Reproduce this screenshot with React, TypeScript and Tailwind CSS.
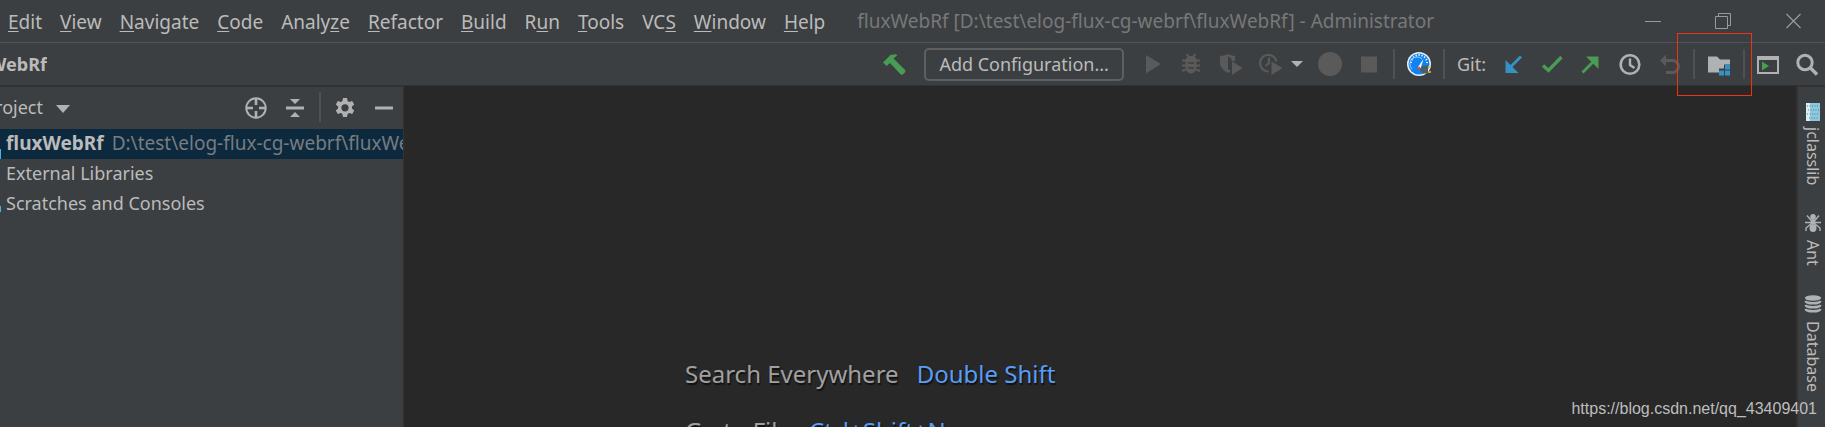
import type { ReactNode } from 'react';

type MenuEntry = { before: string; key: string; after: string };

const MENU: MenuEntry[] = [
  { before: '', key: 'E', after: 'dit' },
  { before: '', key: 'V', after: 'iew' },
  { before: '', key: 'N', after: 'avigate' },
  { before: '', key: 'C', after: 'ode' },
  { before: 'Analy', key: 'z', after: 'e' },
  { before: '', key: 'R', after: 'efactor' },
  { before: '', key: 'B', after: 'uild' },
  { before: 'R', key: 'u', after: 'n' },
  { before: '', key: 'T', after: 'ools' },
  { before: 'VC', key: 'S', after: '' },
  { before: '', key: 'W', after: 'indow' },
  { before: '', key: 'H', after: 'elp' },
];

function Icon({ children }: { children: ReactNode }) {
  return (
    <svg viewBox="0 0 24 24" className="block size-6" aria-hidden="true">
      {children}
    </svg>
  );
}

function IconButton({ label, children }: { label: string; children: ReactNode }) {
  return (
    <button type="button" aria-label={label} className="size-6 shrink-0">
      <Icon>{children}</Icon>
    </button>
  );
}

function Separator() {
  return <span className="mx-3 h-[30px] w-0.5 shrink-0 bg-[#515151]" />;
}

function TitleBar() {
  return (
    <header className="flex h-[43px] items-center border-b border-[#515457] pr-6">
      <nav className="flex shrink-0 items-center gap-[18px] pt-0.5 pl-2 text-[19px] leading-7">
        {MENU.map((m) => (
          <button type="button" key={m.before + m.key + m.after} className="whitespace-nowrap text-[#bbbbbb]">
            {m.before}
            <span className="underline decoration-1 underline-offset-2">{m.key}</span>
            {m.after}
          </button>
        ))}
      </nav>
      <h1 className="ml-8 min-w-0 flex-1 truncate text-[19px] leading-7 text-[#777879]">
        fluxWebRf [D:\test\elog-flux-cg-webrf\fluxWebRf] - Administrator
      </h1>
      <div className="flex shrink-0 gap-[54px]">
        <button type="button" aria-label="Minimize" className="size-4">
          <svg viewBox="0 0 16 16" className="block size-4" stroke="#999a9b" fill="none">
            <path d="M0 8.500h16" />
          </svg>
        </button>
        <button type="button" aria-label="Restore" className="size-4">
          <svg viewBox="0 0 16 16" className="block size-4" stroke="#999a9b" fill="none">
            <path d="M.5 3.500h12v12h-12zM3.500 3.500v-3h12v12h-3" />
          </svg>
        </button>
        <button type="button" aria-label="Close" className="size-4">
          <svg viewBox="0 0 16 16" className="block size-4" stroke="#999a9b" strokeWidth="1.200" fill="none">
            <path d="M1.500 1l14 14M15.500 1l-14 14" />
          </svg>
        </button>
      </div>
    </header>
  );
}

function Toolbar() {
  return (
    <div className="flex h-[43px] items-center justify-between border-b border-[#323232] pr-[5px]">
      <div className="flex w-[47px] justify-end overflow-hidden text-lg font-bold text-[#bbbbbb]">
        <span>fluxWebRf</span>
      </div>
      <div className="flex shrink-0 items-center gap-[18px]">
        <IconButton label="Build Project">
          <path
            fill="#499c54"
            d="M1 10.500L8.500 3L14 2.200L15.300 3.200L11.500 6.500L23.300 18.200V20L20.500 22.700H19L8 11L4.600 14z"
          />
        </IconButton>
        <button
          type="button"
          className="h-[33px] rounded-[5px] border-2 border-[#5e6060] px-[13px] text-lg leading-7 whitespace-nowrap text-[#bbbbbb]"
        >
          Add Configuration...
        </button>
        <div className="flex items-center">
          <div className="flex items-center gap-[15px]">
            <IconButton label="Run">
              <path fill="#5a5a5a" d="M4 3v18.200L19 12z" />
            </IconButton>
            <IconButton label="Debug">
              <path
                stroke="#5a5a5a"
                strokeWidth="2.200"
                fill="none"
                d="M5.500 2.200l3.500 4M14.500 2.200l-3.500 4M1 8.500h18M1 13.500h18M1 19l4-1.500M19 19l-4-1.500"
              />
              <path fill="#5a5a5a" d="M4.500 8a5.500 4 0 0 1 11 0v7a5.500 6.500 0 0 1-11 0z" />
              <path stroke="#3c3f41" strokeWidth="1.400" d="M7 11h6M7 16h6" />
            </IconButton>
            <IconButton label="Run with Coverage">
              <path fill="#5a5a5a" d="M0 4c3 0 5-.7 8-2 3 1.300 5 2 7 2v5h-3.500V6.500L8 4.500v13l2 .500v2l-2 1C3.500 18.500 0 15 0 11z" />
              <path fill="#5a5a5a" d="M12 9.500v13.500L22.500 16z" />
            </IconButton>
            <div className="flex items-center gap-2">
              <IconButton label="Profile">
                <path
                  stroke="#5a5a5a"
                  strokeWidth="2.200"
                  fill="none"
                  d="M9.500 19.500A8.300 8.300 0 1 1 17.500 9.500M10 5.500v5.500l-3.500 3"
                />
                <path fill="#5a5a5a" d="M12.500 9.500v13.500L23.500 16z" />
              </IconButton>
              <button type="button" aria-label="More run options" className="w-3">
                <svg viewBox="0 0 12 6" className="block h-1.5 w-3">
                  <path fill="#afb1b3" d="M0 0h12L6 6z" />
                </svg>
              </button>
            </div>
            <IconButton label="Record">
              <circle cx="12" cy="12" r="12" fill="#5a5a5a" />
            </IconButton>
            <IconButton label="Stop">
              <path fill="#5a5a5a" d="M4 4.500h16v16H4z" />
            </IconButton>
          </div>
          <Separator />
          <IconButton label="Dashboard">
            <circle cx="12" cy="12" r="12" fill="#e8eef4" />
            <circle cx="12" cy="12" r="10.500" fill="#1083f0" />
            <path stroke="#fff" strokeWidth="2" strokeDasharray="1.200 1.800" fill="none" d="M4 11a8 8 0 0 1 16 0" />
            <path stroke="#9fd0ff" strokeWidth="1" fill="none" d="M5 17a7 7 0 0 1 10-10" />
            <path fill="#fff" d="M16.500 7L13.500 16.500L11 15z" />
            <circle cx="12" cy="16" r="1.500" fill="#f0502d" />
            <path fill="#4d5f66" d="M13 17l3-3.500h5v8h-5L13 19z" />
            <path stroke="#eac13b" strokeWidth="1.300" d="M21 15h3M21 20h3" />
          </IconButton>
          <Separator />
          <div className="flex items-center gap-[15px]">
            <span className="text-lg text-[#bbbbbb]">Git:</span>
            <IconButton label="Update Project">
              <path stroke="#3592c4" strokeWidth="2.800" d="M20 4.500L9 15.500" />
              <path fill="#3592c4" d="M4.500 8v13h13z" />
            </IconButton>
            <IconButton label="Commit">
              <path stroke="#499c54" strokeWidth="3.400" fill="none" d="M3 13.500l5.500 5L21.500 5" />
            </IconButton>
            <IconButton label="Push">
              <path stroke="#499c54" strokeWidth="2.800" d="M3.500 20.500L15 9" />
              <path fill="#499c54" d="M7 4.500h12.500V17z" />
            </IconButton>
            <IconButton label="Show History">
              <circle cx="12" cy="12.500" r="9.300" stroke="#afb1b3" strokeWidth="2.600" fill="none" />
              <path stroke="#afb1b3" strokeWidth="2.400" fill="none" d="M12 6.500v6.500l4.500 3" />
            </IconButton>
            <IconButton label="Rollback">
              <path stroke="#5a5a5a" strokeWidth="2.800" fill="none" d="M7 8.500h8.500a6 6 0 0 1 0 12H9" />
              <path fill="#5a5a5a" d="M9 2.500v12L3 8.500z" />
            </IconButton>
          </div>
          <Separator />
          <IconButton label="Project Structure">
            <path fill="#afb1b3" d="M1 4.500h9l3 3h10v5h-6v4h-5v4H1z" />
            <path fill="#3592c4" d="M18 12.500h5v5h-5zM12 18.500h5v5h-5zM18 18.500h5v5h-5z" />
          </IconButton>
          <Separator />
          <div className="flex items-center gap-[15px]">
            <IconButton label="Run Anything">
              <path fill="#afb1b3" d="M0 4h22v18H0zM2 8v12h18V8z" fillRule="evenodd" />
              <path fill="#499c54" d="M5 9.500v9l7-4.500z" />
            </IconButton>
            <IconButton label="Search Everywhere">
              <circle cx="9" cy="10.500" r="7.200" stroke="#afb1b3" strokeWidth="3" fill="none" />
              <path stroke="#afb1b3" strokeWidth="3.400" d="M14 15.500l7 7" />
            </IconButton>
          </div>
        </div>
      </div>
    </div>
  );
}

function ProjectPanel() {
  return (
    <aside className="flex w-[404px] shrink-0 flex-col border-t border-r border-[#323232] bg-[#3c3f41] text-lg text-[#bbbbbb]">
      <div className="flex h-[42px] items-center justify-between pr-[7px] pb-0.5">
        <button type="button" className="flex items-center gap-[13px]">
          <span className="flex w-[43px] justify-end overflow-hidden">
            <span>Project</span>
          </span>
          <svg viewBox="0 0 14 8" className="mt-1 block h-2 w-3.5">
            <path fill="#afb1b3" d="M0 0h14L7 8z" />
          </svg>
        </button>
        <div className="flex items-center">
          <div className="flex gap-[15px]">
            <IconButton label="Select Opened File">
              <circle cx="12" cy="13" r="9.700" stroke="#afb1b3" strokeWidth="2" fill="none" />
              <path stroke="#afb1b3" strokeWidth="2.600" d="M12 3v7M12 16v7M2 13h7M15 13h7" />
            </IconButton>
            <IconButton label="Collapse All">
              <path fill="#afb1b3" d="M3 11.500h18v3H3zM7 4h10l-5 5zM7 22h10l-5-5z" />
            </IconButton>
          </div>
          <Separator />
          <div className="flex gap-[15px]">
            <IconButton label="Settings">
              <path
                fill="#afb1b3"
                fillRule="evenodd"
                d="M10 3h4l.6 3 1.700 1 2.900-1 2 3.500-2.300 2v2l2.300 2-2 3.500-2.900-1-1.700 1-.6 3h-4l-.6-3-1.700-1-2.900 1-2-3.500 2.300-2v-2l-2.300-2 2-3.500 2.900 1 1.700-1zM12 9.200a3.600 3.600 0 1 0 0 7.200a3.600 3.600 0 1 0 0-7.200z"
              />
            </IconButton>
            <IconButton label="Hide">
              <path fill="#afb1b3" d="M3 11.500h18v3H3z" />
            </IconButton>
          </div>
        </div>
      </div>
      <ul>
        <li className="flex h-[30px] items-center overflow-hidden bg-[#0d293e] text-[19px] leading-7 whitespace-nowrap">
          <span className="mr-[5px] h-2.5 w-px shrink-0 self-end bg-[#40b6e0]" />
          <span className="pb-0.5 font-bold">fluxWebRf</span>
          <span className="ml-2 pb-0.5 text-[#777d80]">D:\test\elog-flux-cg-webrf\fluxWebRf</span>
        </li>
        <li className="flex h-[30px] items-center pb-0.5 pl-1.5">External Libraries</li>
        <li className="flex h-[30px] items-center pb-0.5">
          <span className="mt-3 mr-[5px] h-1.5 w-px shrink-0 bg-[#40b6e0]" />
          Scratches and Consoles
        </li>
      </ul>
    </aside>
  );
}

function Editor() {
  return (
    <main className="min-w-0 flex-1 overflow-hidden bg-[#282828] pt-[272px] pl-[281px] text-2xl whitespace-nowrap text-[#a0a0a0] text-shadow-[1px_2px_1px_#111111]">
      <p className="flex h-[57px] gap-[18px]">
        Search Everywhere <span className="text-[#589df6]">Double Shift</span>
      </p>
      <p className="flex gap-[18px]">
        Go to File <span className="text-[#589df6]">Ctrl+Shift+N</span>
      </p>
    </main>
  );
}

function ToolStripe() {
  return (
    <aside className="flex w-[29px] shrink-0 flex-col items-center gap-[29px] border-t border-l-2 border-[#323232] bg-[#3c3f41] pt-4 pl-0.5 text-base text-[#bbbbbb]">
      <button type="button" className="flex flex-col items-center gap-1.5">
        <svg viewBox="0 0 16 18" className="block h-[18px] w-4">
          <path fill="#8fc7de" d="M1 0h14v18H1z" />
          <path fill="#d9eef5" d="M1 0h4v18H1z" />
          <path stroke="#4b7f96" strokeWidth="1" strokeDasharray="1 1.500" d="M2 3h12M3 7h11M2 11h12M4 15h10" />
        </svg>
        <span className="[writing-mode:vertical-rl]">jclasslib</span>
      </button>
      <button type="button" className="flex flex-col items-center gap-2">
        <svg viewBox="0 0 16 18" className="block h-[18px] w-4">
          <path
            stroke="#afb1b3"
            strokeWidth="1.400"
            fill="none"
            d="M2 1.500l5 6M14 1.500l-5 6M0 8.500h16M1 17v-3l6-5M15 17v-3L9 9"
          />
          <ellipse cx="8" cy="3" rx="2.800" ry="3" fill="#afb1b3" />
          <circle cx="8" cy="8" r="2.300" fill="#afb1b3" />
          <ellipse cx="8" cy="14" rx="3.500" ry="4" fill="#afb1b3" />
        </svg>
        <span className="[writing-mode:vertical-rl]">Ant</span>
      </button>
      <button type="button" className="flex flex-col items-center gap-2">
        <svg viewBox="0 0 18 18" className="block size-[18px]">
          <ellipse cx="9" cy="3" rx="8.200" ry="2.800" fill="#afb1b3" />
          <path
            stroke="#afb1b3"
            strokeWidth="2.400"
            fill="none"
            d="M1.500 6c1 3 14 3 15 0M1.500 10c1 3 14 3 15 0M1.500 14c1 3 14 3 15 0"
          />
        </svg>
        <span className="[writing-mode:vertical-rl]">Database</span>
      </button>
    </aside>
  );
}

export default function App() {
  return (
    <div className="relative flex h-screen flex-col overflow-hidden bg-[#3c3f41] font-['Noto_Sans',sans-serif]">
      <TitleBar />
      <Toolbar />
      <div className="flex min-h-0 flex-1">
        <ProjectPanel />
        <Editor />
        <ToolStripe />
      </div>
      <div className="pointer-events-none absolute top-[33px] right-[73px] h-[63px] w-[75px] border border-[#ee3311]" />
      <a
        href="https://blog.csdn.net/qq_43409401"
        className="absolute right-2 bottom-1.5 font-['Liberation_Sans',sans-serif] text-base text-[#bdbdbd]"
      >
        https://blog.csdn.net/qq_43409401
      </a>
    </div>
  );
}
